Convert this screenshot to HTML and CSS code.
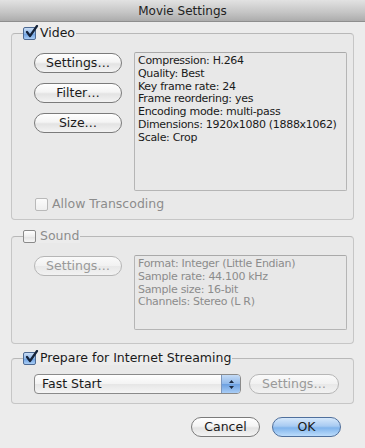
FILE: index.html
```html
<!DOCTYPE html>
<html lang="en">

<head>
  <meta charset="UTF-8" />
  <title>Movie Settings</title>
  <link rel="stylesheet" href="styles.css">
</head>

<body>
  <div class="janela">
    <!-- barra de titulo -->
    <div class="titulo">Movie Settings</div>

    <div class="conteudo">
      <!-- Video -->
      <fieldset class="grupo grupoVideo">
        <legend>
          <span class="caixa marcada"><svg width="15" height="15" viewBox="0 0 15 15"><path d="M3 7 L6 11 L13 1" fill="none" stroke="#15233a" stroke-width="2.2" stroke-linecap="round" stroke-linejoin="round"/></svg></span>
          <span class="rotulo">Video</span>
        </legend>
        <div class="linha">
          <div class="botoes">
            <span class="botao">Settings…</span>
            <span class="botao">Filter…</span>
            <span class="botao">Size…</span>
          </div>
          <div class="info infoVideo">
            Compression: H.264<br>
            Quality: Best<br>
            Key frame rate: 24<br>
            Frame reordering: yes<br>
            Encoding mode: multi-pass<br>
            Dimensions: 1920x1080 (1888x1062)<br>
            Scale: Crop
          </div>
        </div>
        <div class="opcao">
          <span class="caixa desativada"></span>
          <span class="rotulo cinza">Allow Transcoding</span>
        </div>
      </fieldset>

      <!-- Sound -->
      <fieldset class="grupo grupoSom">
        <legend>
          <span class="caixa"></span>
          <span class="rotulo cinza">Sound</span>
        </legend>
        <div class="linha">
          <div class="botoes">
            <span class="botao desligado">Settings…</span>
          </div>
          <div class="info infoSom cinza">
            Format: Integer (Little Endian)<br>
            Sample rate: 44.100 kHz<br>
            Sample size: 16-bit<br>
            Channels: Stereo (L R)
          </div>
        </div>
      </fieldset>

      <!-- Streaming -->
      <fieldset class="grupo grupoStream">
        <legend>
          <span class="caixa marcada"><svg width="15" height="15" viewBox="0 0 15 15"><path d="M3 7 L6 11 L13 1" fill="none" stroke="#15233a" stroke-width="2.2" stroke-linecap="round" stroke-linejoin="round"/></svg></span>
          <span class="rotulo">Prepare for Internet Streaming</span>
        </legend>
        <div class="linhaStream">
          <div class="popup">
            <span class="popupTexto">Fast Start</span>
            <span class="setas"><svg width="7" height="11" viewBox="0 0 7 11"><path d="M3.5 1 L6 4 L1 4 Z M3.5 10 L6 7 L1 7 Z" fill="#1c2a40"/></svg></span>
          </div>
          <span class="botao desligado botaoStream">Settings…</span>
        </div>
      </fieldset>

      <div class="rodape">
        <span class="botao botaoFinal">Cancel</span>
        <span class="botao botaoFinal ok">OK</span>
      </div>
    </div>
  </div>
</body>

</html>
```

FILE: styles.css
```css
body {
  margin: 0;
  background-color: #ececec;
  font-family: "DejaVu Sans", sans-serif;
  color: #1a1a1a;
}

.janela {
  width: 365px;
  height: 448px;
  background-color: #ececec;
}

.titulo {
  height: 22px;
  line-height: 22px;
  text-align: center;
  font-size: 12px;
  color: #222;
  background: linear-gradient(#e2e2e2, #c4c4c4 60%, #acacac);
  border-bottom: 1px solid #8e8e8e;
  box-sizing: border-box;
}

.conteudo {
  padding: 0 11px;
}

.grupo {
  margin: 0;
  padding: 0;
  width: 343px;
  box-sizing: border-box;
  border: 1px solid #c6c6c6;
  border-top-color: #b8b8b8;
  border-radius: 4px;
  background-color: #e9e9e9;
}

.grupo legend {
  display: flex;
  align-items: center;
  height: 14px;
  padding: 0;
  margin-left: 11px;
  background-color: #ececec;
}

.rotulo {
  font-size: 12.5px;
  line-height: 14px;
  padding: 0 1px 0 4px;
}

.cinza {
  color: #8c8c8c;
}

.caixa {
  display: inline-block;
  position: relative;
  width: 13px;
  height: 13px;
  box-sizing: border-box;
  border: 1px solid #8a8a8a;
  border-radius: 2px;
  background: linear-gradient(#ffffff, #eeeeee 50%, #e2e2e2 51%, #f6f6f6);
}

.caixa.desativada {
  border-color: #b9b9b9;
  background: linear-gradient(#fbfbfb, #efefef);
}

.caixa.marcada {
  border-color: #4d6a93;
  background: linear-gradient(#c9ddf5, #8fb8ea 50%, #6b9fe0 51%, #a9cdf6);
}

.caixa svg {
  position: absolute;
  left: 0;
  top: -3px;
}

.grupoVideo {
  margin-top: 4px;
  padding-bottom: 8px;
}

.grupoSom {
  margin-top: 9px;
  padding-bottom: 13px;
}

.grupoStream {
  margin-top: 7px;
  padding-bottom: 9px;
}

.linha {
  display: flex;
  gap: 12px;
  padding: 12px 6px 0 22px;
}

.botoes {
  display: flex;
  flex-direction: column;
  gap: 10px;
  width: 88px;
  padding-top: 1px;
}

.botao {
  display: block;
  height: 20px;
  box-sizing: border-box;
  border: 1px solid #7b7b7b;
  border-radius: 10px;
  background: linear-gradient(#ffffff, #f4f4f4 45%, #e3e3e3 55%, #f3f3f3);
  font-size: 12.5px;
  line-height: 18px;
  text-align: center;
  color: #1a1a1a;
}

.botao.desligado {
  border-color: #b6b6b6;
  color: #999;
  background: linear-gradient(#fafafa, #f1f1f1 50%, #e8e8e8 51%, #f2f2f2);
}

.info {
  width: 213px;
  box-sizing: border-box;
  border: 1px solid #b5b5b5;
  border-top-color: #a9a9a9;
  border-radius: 2px;
  background-color: #e8e8e8;
  padding: 2px 0 0 3px;
  font-size: 11px;
  letter-spacing: -0.3px;
  line-height: 12.8px;
  white-space: nowrap;
}

.infoVideo {
  height: 139px;
}

.infoSom {
  height: 75px;
}

.opcao {
  display: flex;
  align-items: center;
  padding: 6px 0 0 23px;
}

.linhaStream {
  display: flex;
  gap: 8px;
  padding: 9px 0 0 22px;
}

.popup {
  display: flex;
  width: 207px;
  height: 20px;
  box-sizing: border-box;
  border: 1px solid #8a8a8a;
  border-radius: 4px;
  overflow: hidden;
  background: linear-gradient(#ffffff, #f3f3f3 50%, #e6e6e6 51%, #f5f5f5);
}

.popupTexto {
  flex: 1;
  font-size: 12.5px;
  line-height: 18px;
  padding-left: 7px;
}

.setas {
  width: 18px;
  display: flex;
  align-items: center;
  justify-content: center;
  border-left: 1px solid #7d97bd;
  background: linear-gradient(#c4dbf6, #8fb8ea 50%, #6b9fe0 51%, #a9cdf6);
}

.botaoStream {
  width: 90px;
}

.rodape {
  display: flex;
  justify-content: flex-end;
  gap: 12px;
  padding: 13px 13px 0 0;
}

.botaoFinal {
  width: 69px;
}

.botao.ok {
  border-color: #4f6f9c;
  background: linear-gradient(#d6e8fb, #a8cbf2 45%, #80b4ec 55%, #bcdcfb);
}
```
